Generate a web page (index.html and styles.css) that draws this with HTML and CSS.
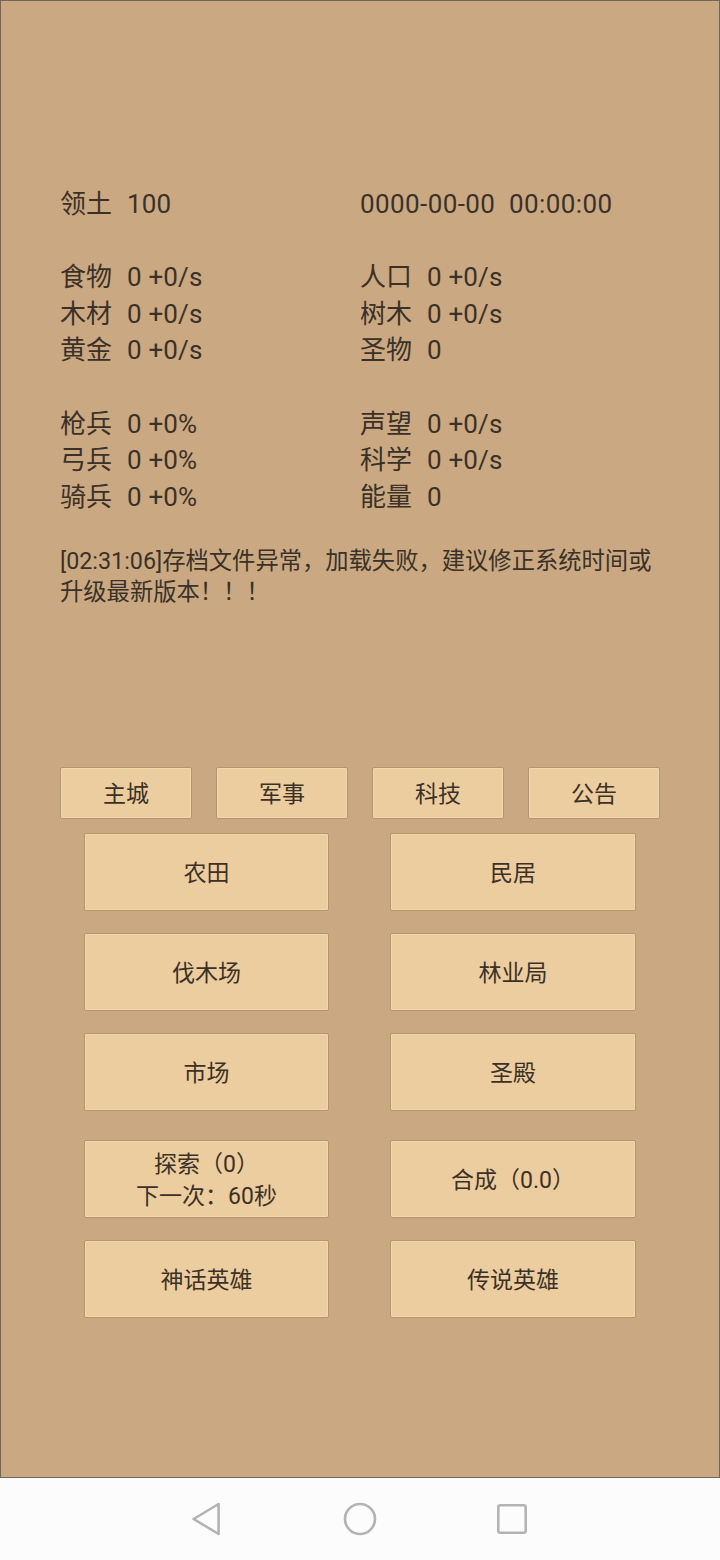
FILE: index.html
```html
<!DOCTYPE html>
<html lang="zh-CN">
<head>
<meta charset="utf-8">
<title>领土</title>
<link rel="stylesheet" href="styles.css">
</head>
<body>
<div class="screen">
  <main class="game">
    <section class="stats">
      <div class="group">
        <div class="row"><span class="label">领土</span><span class="val">100</span></div>
        <div class="row"><span class="time">0000-00-00&nbsp;&nbsp;00:00:00</span></div>
      </div>
      <div class="group">
        <div class="row"><span class="label">食物</span><span class="val">0 +0/s</span></div>
        <div class="row"><span class="label">人口</span><span class="val">0 +0/s</span></div>
        <div class="row"><span class="label">木材</span><span class="val">0 +0/s</span></div>
        <div class="row"><span class="label">树木</span><span class="val">0 +0/s</span></div>
        <div class="row"><span class="label">黄金</span><span class="val">0 +0/s</span></div>
        <div class="row"><span class="label">圣物</span><span class="val">0</span></div>
      </div>
      <div class="group">
        <div class="row"><span class="label">枪兵</span><span class="val">0 +0%</span></div>
        <div class="row"><span class="label">声望</span><span class="val">0 +0/s</span></div>
        <div class="row"><span class="label">弓兵</span><span class="val">0 +0%</span></div>
        <div class="row"><span class="label">科学</span><span class="val">0 +0/s</span></div>
        <div class="row"><span class="label">骑兵</span><span class="val">0 +0%</span></div>
        <div class="row"><span class="label">能量</span><span class="val">0</span></div>
      </div>
    </section>
    <p class="message">[02:31:06]存档文件异常，加载失败，建议修正系统时间或升级最新版本！！！</p>

    <nav class="tabs">
      <button class="tab">主城</button>
      <button class="tab">军事</button>
      <button class="tab">科技</button>
      <button class="tab">公告</button>
    </nav>

    <section class="actions">
      <button class="act">农田</button>
      <button class="act">民居</button>
      <button class="act">伐木场</button>
      <button class="act">林业局</button>
      <button class="act">市场</button>
      <button class="act">圣殿</button>
      <button class="act act-gap act-two">探索（0）<br>下一次：60秒</button>
      <button class="act act-gap">合成（0.0）</button>
      <button class="act">神话英雄</button>
      <button class="act">传说英雄</button>
    </section>
  </main>
  <footer class="navbar">
    <svg class="nav-icon" width="32" height="36" viewBox="0 0 32 36"><path d="M26.6 3 L26.6 33 L1.6 18 Z" fill="none" stroke="#b3b3b3" stroke-width="2.6" stroke-linejoin="round"/></svg>
    <svg class="nav-icon" width="36" height="36" viewBox="0 0 36 36"><circle cx="18" cy="18" r="15" fill="none" stroke="#b3b3b3" stroke-width="2.6"/></svg>
    <svg class="nav-icon" width="32" height="32" viewBox="0 0 32 32"><rect x="2.3" y="2.3" width="27.4" height="27.4" rx="2" fill="none" stroke="#b3b3b3" stroke-width="2.6"/></svg>
  </footer>
</div>
</body>
</html>
```
FILE: styles.css
```css
* { box-sizing: border-box; }
html, body {
  margin: 0;
  padding: 0;
  background: #fcfcfc;
}
body {
  font-family: "Roboto", "Noto Sans CJK SC", sans-serif;
  color: #3b3128;
}
.screen {
  width: 720px;
  height: 1560px;
  display: flex;
  flex-direction: column;
}
.game {
  height: 1478px;
  background: #caa982;
  border: 1px solid #6e665c;
  padding: 185px 0 0 59px;
}
.stats {
  font-size: 26px;
  line-height: 36.6px;
}
.group {
  display: grid;
  grid-template-columns: 300px 300px;
}
.group + .group {
  margin-top: 36.6px;
}
.row {
  display: flex;
  white-space: nowrap;
}
.label {
  margin-right: 15px;
}
.val {
  letter-spacing: 0.15px;
}
.time {
  letter-spacing: 0.4px;
}
.message {
  margin: 31px 0 0 0;
  width: 600px;
  font-size: 23.3px;
  line-height: 31px;
}
button {
  font-family: inherit;
  color: #3d3127;
  background: #ebcd9f;
  border: 1px solid #b4956d;
  border-radius: 2px;
  padding: 0;
  cursor: pointer;
  box-shadow: inset 0 0 0 1px #f0d7ad;
}
.tabs {
  margin-top: 159px;
  width: 600px;
  display: grid;
  grid-template-columns: repeat(4, 1fr);
  gap: 24px;
}
.tab {
  height: 52px;
  font-size: 23px;
  padding-bottom: 3px;
}
.actions {
  margin: 14px 0 0 24px;
  width: 553px;
  display: grid;
  grid-template-columns: 245px 246px;
  column-gap: 61px;
  row-gap: 22px;
}
.act {
  height: 78px;
  font-size: 23px;
  line-height: 32px;
  padding-top: 3px;
}
.act-gap {
  margin-top: 7px;
}
.navbar {
  flex: 1;
  background: #fcfcfc;
  display: flex;
  align-items: center;
  justify-content: center;
  gap: 118px;
}
.nav-icon {
  display: block;
}
```
